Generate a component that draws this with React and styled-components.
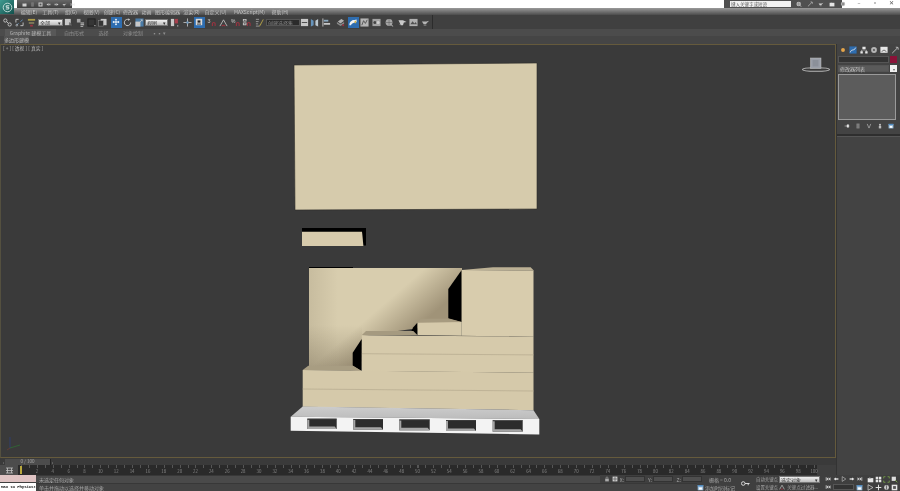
import React from "react";
import styled, { createGlobalStyle } from "styled-components";

const Global = createGlobalStyle`
  html, body { margin: 0; padding: 0; background: #3a3a3a; overflow: hidden; }
  #root { width: 900px; height: 491px; }
`;

const Page = styled.div`
  width: 900px; height: 491px; display: flex; flex-direction: column; position: relative; overflow: hidden;
  background: #3f3f3f; color: #a8a8a8;
  font-family: "Noto Sans CJK SC", "Noto Sans", sans-serif; font-size: 5.5px; line-height: 1;
  filter: blur(0.4px);
`;
const Logo = styled.div`
  position: absolute; left: 0; top: 0; width: 14px; height: 14px; z-index: 2;
  background: linear-gradient(135deg, #3f9a90, #12504c); display: flex; align-items: center; justify-content: center;
`;
const TitleBar = styled.div`height: 8px; background: #fff; display: flex; flex: none;`;
const Qat = styled.div`
  margin-left: 17px; width: 55px; background: linear-gradient(#666, #3f3f3f); display: flex; align-items: center; gap: 1px; padding-left: 1px; box-sizing: border-box;
`;
const QatSlot = styled.span`
  width: ${p => p.$w}px; height: 8px; display: flex; align-items: center; justify-content: center; flex: none; opacity: .85;
`;
const InfoCenter = styled.div`
  margin-left: 652px; width: 118px; height: 8px; background: #505050; display: flex; align-items: center; box-sizing: border-box; padding-left: 6px; gap: 5px; flex: none;
`;
const Search = styled.div`
  width: 61px; height: 6px; background: #f2f2f2; color: #555; font-size: 4.5px; display: flex; align-items: center; padding-left: 1px; box-sizing: border-box; flex: none; white-space: nowrap; overflow: hidden;
`;
const WinButtons = styled.div`display: flex; margin-left: 9px; align-items: center; color: #555;`;
const WinBtn = styled.span`width: 16px; display: flex; justify-content: center;`;

const MenuBar = styled.div`
  height: 7px; flex: none; background: linear-gradient(#9a9a9a, #4c4c4c); display: flex; align-items: center; padding-left: 18px; color: #c4c4c4; font-size: 5px;
`;
const MenuItem = styled.span`
  width: ${p => p.$w}px; flex: none; white-space: nowrap; text-align: center;
`;

const Toolbar = styled.div`
  height: 14px; flex: none; display: flex; background: #404040;
`;
const ToolGroup = styled.div`
  width: 433px; box-sizing: border-box; padding-left: 2px; display: flex; align-items: center; border-right: 1px solid #2c2c2c;
`;
const Slot = styled.div`
  width: ${p => p.$w}px; height: 12px; flex: none; display: flex; align-items: center; justify-content: center;
`;
const ToolBtn = styled.div`
  width: 11px; height: 11px; display: flex; align-items: center; justify-content: center;
  background: ${p => (p.$on ? "#2e6db0" : "transparent")};
  opacity: ${p => (p.$on ? 1 : 0.82)};
`;
const Combo = styled.div`
  width: ${p => p.$w}px; height: 7px; flex: none; box-sizing: border-box; margin-left: ${p => p.$ml || 0}px;
  background: ${p => (p.$dark ? "#2b2b2b" : "linear-gradient(#f0f0f0,#bdbdbd)")}; color: ${p => (p.$dark ? "#8d8d8d" : "#333")};
  border: 1px solid ${p => (p.$dark ? "#555" : "#777")}; font-size: 5px; display: flex; align-items: center; justify-content: space-between; padding: 0 1px; white-space: nowrap; overflow: hidden;
`;

const RibbonTabs = styled.div`
  height: 7px; flex: none; background: #4c4c4c; display: flex; align-items: center; font-size: 5px; color: #8f8f8f;
`;
const RibbonTab = styled.span`
  width: ${p => p.$w}px; height: 7px; flex: none; display: flex; align-items: center; justify-content: center; white-space: nowrap;
  background: ${p => (p.$on ? "#585858" : "transparent")}; color: ${p => (p.$on ? "#b5b5b5" : "#8f8f8f")};
  margin-left: ${p => p.$ml || 0}px;
`;
const RibbonBody = styled.div`
  height: 8px; flex: none; background: #454545; display: flex; align-items: flex-start; padding-left: 4px;
`;
const SubTab = styled.span`
  width: 25px; height: 7px; display: flex; align-items: center; justify-content: center; background: #525252; color: #bcbcbc; font-size: 5px; white-space: nowrap;
`;

const Workspace = styled.div`
  flex: 1; min-height: 0; display: grid; grid-template-columns: 836px 64px;
`;
const LeftCol = styled.div`display: flex; flex-direction: column; min-height: 0;`;
const Viewport = styled.div`
  height: 414px; flex: none; position: relative; box-sizing: border-box; background: #3a3a3a; border: 1px solid #655a3c; border-left-color: #54503f;
`;
const ViewLabel = styled.div`
  position: absolute; left: 2px; top: 1px; font-size: 4.8px; color: #b5b5b5; white-space: pre; z-index: 1;
`;
const Scene = styled.svg`position: absolute; left: -1px; top: -1px; display: block;`;

const SliderRow = styled.div`
  height: 7px; flex: none; background: #3a3a3a; display: flex; align-items: center; padding-left: 2px;
`;
const SliderEnd = styled.span`
  width: 3px; color: #999; font-size: 5px; flex: none; text-align: center;
`;
const SliderThumb = styled.div`
  width: 45px; height: 6px; background: #4c4c4c; border-right: 1px solid #222; color: #a8a8a8; font-size: 4.6px; display: flex; align-items: center; justify-content: center; flex: none;
`;
const RulerRow = styled.div`
  height: 10px; flex: none; display: flex; background: #3f3f3f;
`;
const RulerKey = styled.div`
  width: 18px; flex: none; background: #4c4c4c; display: flex; align-items: center; justify-content: center;
`;
const Ruler = styled.div`
  width: 799px; flex: none; position: relative; background: #2a2a2a;
  background-image: repeating-linear-gradient(90deg, #565656 0 1px, transparent 1px 7.93px);
  background-size: 100% 3px; background-repeat: no-repeat; background-position: 3px 0;
`;
const Mark = styled.div`
  position: absolute; left: 2px; top: 1px; width: 2px; height: 8px; background: #b9a93e;
`;
const RulerNums = styled.div`
  display: flex; padding-left: 11px; padding-top: 4px; color: #858585; font-size: 4.4px;
`;
const RulerNum = styled.span`width: 15.86px; flex: none; text-align: center;`;

const Panel = styled.div`
  background: #434343; border-left: 1px solid #333; display: flex; flex-direction: column; align-items: center; min-height: 0;
`;
const PanelTabs = styled.div`
  height: 12px; width: 100%; flex: none; box-sizing: border-box; padding-left: 1px; display: flex; align-items: center;
`;
const PanelTab = styled.span`width: 10.4px; display: flex; justify-content: center;`;
const FieldRow = styled.div`
  width: 59px; flex: none; display: flex; justify-content: space-between; margin-bottom: 2px; align-self: flex-start; margin-left: 1px;
`;
const NameField = styled.div`
  width: 51px; height: 7px; box-sizing: border-box; background: ${p => (p.$list ? "#5a5a5a" : "#333")}; border: 1px solid #555; color: #c0c0c0; font-size: 5px; display: flex; align-items: center; padding-left: 1px; white-space: nowrap;
`;
const Swatch = styled.div`
  width: 7px; height: 7px; background: ${p => p.$c}; color: #666; font-size: 4px; display: flex; align-items: center; justify-content: center;
`;
const StackList = styled.div`
  width: 58px; height: 46px; flex: none; box-sizing: border-box; background: #5c5c5c; border: 1px solid #9a9a9a; align-self: flex-start; margin-left: 1px;
`;
const StackTools = styled.div`
  width: 100%; height: 10px; flex: none; display: flex; align-items: center; justify-content: space-around; padding: 0 4px; box-sizing: border-box; margin-top: 1px;
`;
const PanelRule = styled.div`
  width: 100%; height: 2px; flex: none; margin-top: 3px; background: #2e2e2e; border-bottom: 1px solid #555;
`;

const StatusBar = styled.div`
  height: 16px; flex: none; display: flex; background: #3f3f3f;
`;
const MaxBox = styled.div`width: 36px; flex: none; display: flex; flex-direction: column; gap: 1px;`;
const MaxPink = styled.div`height: 7px; background: #dfc3c3;`;
const MaxWhite = styled.div`
  height: 8px; background: #fff; color: #111; font-family: "Liberation Mono", monospace; font-size: 4.2px; letter-spacing: -.2px; font-weight: 700; display: flex; align-items: center; justify-content: space-between; padding: 0 1px; box-sizing: border-box; white-space: nowrap;
`;
const Prompts = styled.div`width: 699px; flex: none; display: flex; flex-direction: column;`;
const PromptRow = styled.div`display: flex; height: 8px; align-items: center;`;
const Message = styled.div`
  flex: 1; height: 7px; background: ${p => (p.$top ? "#4a4a4a" : "#434343")}; border-top: 1px solid #383838; display: flex; align-items: center; padding-left: 3px; color: #a5a5a5; font-size: 5px; white-space: nowrap;
`;
const CoordArea = styled.div`
  width: 135px; flex: none; display: flex; align-items: center; padding-left: 3px; box-sizing: border-box; font-size: 5px; color: #a5a5a5;
`;
const CoordIcon = styled.span`width: 8px; flex: none; display: flex; justify-content: center;`;
const CoordLabel = styled.span`width: ${p => p.$w || 6}px; flex: none; text-align: right; padding-right: 1px; box-sizing: border-box;`;
const CoordField = styled.div`width: 20px; height: 6px; flex: none; background: #4f4f4f; border: 1px solid #333; box-sizing: border-box;`;
const GridText = styled.span`margin-left: 7px; white-space: nowrap;`;
const TagArea = styled.div`
  width: 38px; flex: none; display: flex; align-items: center; gap: 1px; font-size: 5px; color: #a5a5a5; white-space: nowrap;
`;
const KeyCol = styled.div`width: 20px; flex: none; display: flex; align-items: center; justify-content: center;`;
const KeyLabels = styled.div`width: 24px; flex: none; display: flex; flex-direction: column; justify-content: space-around; align-items: center; font-size: 4.4px; color: #a8a8a8; white-space: nowrap;`;
const KeyControls = styled.div`width: 42px; flex: none; display: flex; flex-direction: column; justify-content: space-around;`;
const FilterRow = styled.div`display: flex; align-items: center; gap: 2px; height: 7px; font-size: 4.6px; color: #a0a0a0; white-space: nowrap;`;
const Play = styled.div`width: 38px; margin-left: 4px; flex: none; display: flex; flex-direction: column; justify-content: space-around;`;
const Nav = styled.div`width: 34px; flex: none; display: grid; grid-template-columns: repeat(4, 8px); grid-template-rows: 8px 8px; align-items: center; justify-items: center; margin-left: 3px;`;
const IconRow = styled.div`display: flex; align-items: center; justify-content: space-between; height: 8px;`;
const FrameField = styled.div`width: 21px; height: 6px; background: #333; border: 1px solid #555; box-sizing: border-box;`;

const Ico = styled.svg`display: block; flex: none;`;
const I = ({ s = 10, children }) => <Ico width={s} height={s} viewBox="0 0 10 10" fill="none">{children}</Ico>;

const W = "#e6e6e6", G = "#9d9d9d", R = "#b03040", B = "#6fa7d8", Y = "#c5b04a", D = "#222";
const mag = <path d="M6 9V6.5a1.4 1.4 0 0 1 3 0V9" stroke={R} strokeWidth="1.2" />;

const icons = {
  link: <><circle cx="2.6" cy="2.8" r="1.8" stroke={W} /><circle cx="7.4" cy="7.2" r="1.8" stroke={W} /><path d="M4 4l2 2" stroke={W} /></>,
  unlink: <><path d="M1 5V1.5h3M9 5v3.5H6" stroke={W} /><path d="M1.5 8L4 6M8.5 2L6 4" stroke={B} /><circle cx="2" cy="8" r="1" stroke={W} strokeWidth=".7" /></>,
  bind: <><path d="M1 1h8v2H1z" fill={Y} /><path d="M2 4.5h6v2H2z" fill="#8f8a60" /><path d="M3.5 7.5h3v2h-3z" fill={R} /></>,
  selobj: <><rect x="1" y="1" width="6.5" height="7" fill={W} /><path d="M6 5l3.5 2-1.5.5 1 1.5-1 .5-1-1.5L6 9z" fill="#777" stroke={D} strokeWidth=".3" /></>,
  selname: <><path d="M1 1h4v4H1z" fill="#bbb" /><path d="M5 5h4v1H5zM5 7h4v1H5zM5 9h3v.8H5z" fill={W} /></>,
  rect: <><rect x="1" y="1" width="8" height="8" fill="#353535" stroke="#161616" /><path d="M8 8.5h1.5" stroke={W} /></>,
  win: <><rect x="3" y="1" width="6.5" height="7" fill={W} /><rect x=".8" y="3" width="5" height="6" fill="#333" stroke="#aaa" strokeWidth=".5" /></>,
  move: <><path d="M5 .5L6.5 2.5h-1V4.5h2v-1L9.5 5 7.5 6.5v-1h-2v2h1L5 9.5 3.5 7.5h1v-2h-2v1L.5 5l2-1.5v1h2v-2h-1z" fill="#fff" /></>,
  rot: <><path d="M8.5 5A3.5 3.5 0 1 1 6.6 1.9" stroke={W} strokeWidth="1.1" /><path d="M6 .2l2 1.8-2.4 1z" fill={W} /></>,
  scale: <><rect x=".5" y=".5" width="9" height="9" fill="#4d88bd" /><path d="M.5 9.5V4h5.5v5.5z" fill={W} /><path d="M5 5l3-3M6.3 2H8v1.7" stroke={W} strokeWidth=".8" /></>,
  ref: <><rect x="1" y="1" width="3.6" height="8" fill={W} /><rect x="5.2" y="1" width="3.6" height="5" fill="#c04050" /><path d="M8.6 8v1.5" stroke={W} /></>,
  pivot: <><path d="M5 .5v9M.5 5h9" stroke={W} strokeWidth=".9" /><rect x="3.8" y="3.8" width="2.4" height="2.4" fill={B} /></>,
  key: <><rect x="1" y="1" width="8" height="8" fill="#d9d9d9" /><rect x="3.2" y="3" width="3.6" height="2.8" fill="#222" /><path d="M2.5 7.6h5" stroke="#222" /></>,
  snap: <><text x=".5" y="5.5" fontSize="6" fill={W} fontFamily="Liberation Sans">3</text>{mag}</>,
  angle: <><path d="M1 9L5 2l4 7" stroke={W} strokeWidth=".9" /><path d="M3 9a3 3 0 0 1 4 0" stroke={R} strokeWidth="1.2" /></>,
  pct: <><text x="0" y="5.5" fontSize="5.5" fill={W} fontFamily="Liberation Sans">%</text>{mag}</>,
  spin: <><path d="M1 1h4v3H1zM1 5h4v3H1z" fill={W} /><path d="M2 2.5h2M2 6.5h2" stroke="#333" />{mag}</>,
  edit: <><path d="M1 1.5h3.5M1 4h3M1 6.5h2.5M1 9h4" stroke={W} strokeWidth=".7" /><path d="M9 1L5 8l-.5 1.5L6 8.5 9.5 2z" fill={Y} /></>,
  named: <><rect x="1" y="1" width="8" height="8" fill={W} /><path d="M2 5h6" stroke="#444" /></>,
  mirror: <><path d="M1 1l3 2v5L1 9.5z" fill={B} /><path d="M9 1L6 3v5l3 1.5z" fill="#d7e5ef" /><path d="M5 .5v9" stroke="#444" /></>,
  align: <><path d="M1 .5v9" stroke={W} /><path d="M2 2h5v2H2z" fill="#9cc0dd" /><path d="M2 5.5h7v2H2z" fill={W} /></>,
  layer: <><path d="M2 4l4-3 3 2-4 3z" fill="#ccc" /><path d="M1 6.5l4 2.5 4-2.5v-2L5 7 1 4.5z" fill="#999" /><path d="M7 7h2v2H7z" fill={R} /></>,
  curve: <><path d="M.5 7.5C2 3 4.5 2.5 7 2.5L9.5 2v3L7 5.5C5 6 3 7 2.5 9H.5z" fill="#f3f3f3" /><path d="M7 3.5h2v3H7z" fill="#d7b84d" /></>,
  graph: <><rect x=".5" y=".5" width="9" height="9" fill="#cfcfcf" /><path d="M2 8l2-5 2 3 2-4" stroke="#555" /></>,
  mat: <><rect x=".5" y="1" width="9" height="8" fill="#b8b8b8" /><circle cx="3.2" cy="5" r="1.7" fill="#444" /><circle cx="6.8" cy="5" r="1.7" fill="#eee" /></>,
  sphere: <><circle cx="4.5" cy="5" r="3.8" fill="#bdbdbd" /><path d="M1 5h7M4.5 1v8" stroke="#555" strokeWidth=".5" /><path d="M7 8l2 1.2" stroke={W} /></>,
  teapot: <><path d="M.5 2.5h5l4 2-3 .5-1 3H3L1.5 4.5z" fill={W} /><path d="M1 6.5l1 1" stroke="#777" /></>,
  rend2: <><rect x=".5" y="1" width="9" height="8" fill="#c9c9c9" /><path d="M1.5 7L4 3.5 6 6l1.5-1.5L8.8 7z" fill="#555" /></>,
  kettle: <><path d="M1 4h5l3-1-2.5 2.5-1 1.5H3z" fill="#cfcfcf" /><path d="M3 8h3" stroke={G} /></>,
  dot: <><circle cx="5" cy="5" r="2.4" fill="#e5a54a" /></>,
  panelMod: <><rect x=".5" y=".5" width="9" height="9" fill="#2e6db0" /><path d="M1.5 8C3 3 6 7 8.5 2" stroke={W} strokeWidth="1.1" /></>,
  hier: <><path d="M3 .8h4v3H3zM.5 6.5h3v3h-3zM6.5 6.5h3v3h-3z" fill={W} /><path d="M5 3.5V5H2v2M5 5h3v2" stroke={W} strokeWidth=".6" /></>,
  motion: <><circle cx="5" cy="5" r="3.6" fill="#b5b5b5" /><circle cx="5" cy="5" r="1.3" fill="#555" /></>,
  display: <><rect x=".5" y="1" width="9" height="7.5" fill={W} /><path d="M2 7l3-2 3 2" stroke="#555" /></>,
  util: <><path d="M1.5 9L8 2.5M6 1.5l2.8.3.2 2.8" stroke="#c9c9c9" strokeWidth="1.1" /></>,
  pin: <><path d="M1 5h4M5 3h3v4H5z" stroke={W} fill={W} strokeWidth=".8" /></>,
  bars: <><rect x="2.5" y="1" width="5" height="8" fill="#8a8a8a" /><path d="M3 3h4M3 5h4M3 7h4" stroke="#555" strokeWidth=".6" /></>,
  vee: <><path d="M2 1.5l3 7 3-7" stroke="#c9c9c9" strokeWidth="1" /></>,
  drum: <><circle cx="5" cy="3" r="1.8" fill="#bbb" /><rect x="3" y="5" width="4" height="4" fill="#bbb" /></>,
  cfg: <><rect x="1" y="1.5" width="8" height="7.5" fill="#9fc0dd" /><rect x="1" y="1.5" width="8" height="2" fill="#4d88bd" /><path d="M3 5h4v3H3z" fill="#fff" /></>,
  keyS: <><circle cx="2.5" cy="5" r="2" stroke={W} strokeWidth="1" /><path d="M4.5 5h5M8 5v2" stroke={W} strokeWidth="1" /></>,
  lock: <><rect x="2" y="4.5" width="6" height="4.5" fill="#aaa" /><path d="M3.5 4.5V3a1.5 1.5 0 0 1 3 0v1.5" stroke="#aaa" /></>,
  abs: <><rect x="1" y="1" width="8" height="8" fill="#cfcfcf" /><path d="M5 1.5v7M1.5 5h7" stroke="#444" /></>,
  first: <><path d="M2 2v6" stroke={W} strokeWidth="1.2" /><path d="M5.5 2v6L2.8 5zM9 2v6L6.2 5z" fill={W} /></>,
  prev: <><path d="M5 2.5v5L1 5z" fill={W} /><rect x="5" y="3.5" width="4" height="3" fill="#bbb" /></>,
  play: <><path d="M2 1v8l6-4z" stroke={W} strokeWidth=".8" /></>,
  next: <><path d="M5 2.5v5L9 5z" fill={W} /><rect x="1" y="3.5" width="4" height="3" fill="#bbb" /></>,
  last: <><path d="M8 2v6" stroke={W} strokeWidth="1.2" /><path d="M1 2v6l2.7-3zM4.5 2v6L7.2 5z" fill={W} /></>,
  navA: <><path d="M1 3h8v6H1z" fill={W} /><path d="M4 1.5l2 2H2z" fill="#888" /></>,
  navB: <><path d="M1 1h3.5v3.5H1zM5.5 1H9v3.5H5.5zM1 5.5h3.5V9H1zM5.5 5.5H9V9H5.5z" fill={W} /></>,
  navC: <><path d="M1 3.5V1h2.5M9 3.5V1H6.5M1 6.5V9h2.5M9 6.5V9H6.5" stroke="#7fb24a" strokeWidth="1" /></>,
  navD: <><path d="M1 1h6v6H1z" fill="#ddd" /><path d="M6 6l3 3" stroke="#7fb24a" strokeWidth="1.2" /></>,
  navE: <><path d="M1.5 1v8l7-4z" stroke={W} strokeWidth=".9" /></>,
  navF: <><path d="M1 5h8M5 1v8" stroke={W} strokeWidth="1.4" /></>,
  navG: <><circle cx="5" cy="5" r="3.5" fill="#c8c8c8" /><path d="M5 2v6" stroke="#444" /></>,
  navH: <><rect x="1" y="1" width="8" height="8" fill={W} /><rect x="3" y="3" width="4" height="4" fill="#555" /></>,
};

const toolbar = [
  ["link", 11], ["unlink", 12], ["bind", 12], ["combo1"], ["selobj", 11], ["selname", 12], ["rect", 11], ["win", 11],
  ["gap", 2], ["move", 12, true], ["rot", 11], ["scale", 12], ["combo2"], ["ref", 13], ["pivot", 12], ["key", 12, true],
  ["snap", 12], ["angle", 12], ["pct", 12], ["spin", 11], ["edit", 14], ["combo3"], ["named", 8], ["mirror", 12],
  ["align", 13], ["layer", 14], ["curve", 12, true], ["graph", 11], ["mat", 12], ["sphere", 14], ["teapot", 12], ["rend2", 11], ["kettle", 12],
];

const menus = [["编辑(E)", 22], ["工具(T)", 21], ["组(G)", 20], ["视图(V)", 21], ["创建(C)", 20], ["修改器", 17], ["动画", 15], ["图形编辑器", 27], ["渲染(R)", 21], ["自定义(U)", 27], ["MAXScript(M)", 41], ["帮助(H)", 20]];

const holes = [[307.3, 336.7, 418.7, 429], [353.3, 383, 419, 429.7], [399.3, 429.7, 419.5, 430.3], [446, 476, 420, 431], [492.7, 522.7, 420.3, 431.7]];

const SceneArt = () => (
  <Scene width="836" height="414" viewBox="0 44 836 414">
    <defs>
      <linearGradient id="wall" x1="386" y1="302" x2="412" y2="332" gradientUnits="userSpaceOnUse">
        <stop offset="0" stopColor="#d8cdae" />
        <stop offset="1" stopColor="#a09378" />
      </linearGradient>
      <linearGradient id="wallEdge" x1="309" y1="0" x2="338" y2="0" gradientUnits="userSpaceOnUse">
        <stop offset="0" stopColor="#5f5440" stopOpacity=".14" />
        <stop offset="1" stopColor="#5f5440" stopOpacity="0" />
      </linearGradient>
      <linearGradient id="wallFloor" x1="0" y1="325" x2="0" y2="366" gradientUnits="userSpaceOnUse">
        <stop offset="0" stopColor="#5f5440" stopOpacity="0" />
        <stop offset="1" stopColor="#5f5440" stopOpacity=".3" />
      </linearGradient>
      <linearGradient id="palletTop" x1="0" y1="406" x2="0" y2="418" gradientUnits="userSpaceOnUse">
        <stop offset="0" stopColor="#cdcdcd" />
        <stop offset="1" stopColor="#bdbdbd" />
      </linearGradient>
    </defs>

    <polygon points="294,65 537,63 537,209 295,210" fill="#d6cbac" stroke="#2d2c28" strokeWidth=".6" />

    <polygon points="302,228 366,228 366,245.5 363,245.5 362,232 302,232" fill="#000" />
    <polygon points="302,231.7 362,231.7 363.4,246 302,246" fill="#d7cbac" />

    <polygon points="309,267 353,267 353,268.5 309,268.5" fill="#000" />
    <polygon points="309,268 462,268 462,322 362,336 361,371 309,366" fill="url(#wall)" />
    <polygon points="309,268 338,268 338,366 309,366" fill="url(#wallEdge)" />
    <polygon points="309,325 362,325 362,366 309,366" fill="url(#wallFloor)" />

    <polygon points="461.7,270 448.3,289 448.3,318.3 461.7,322" fill="#000" />
    <polygon points="461.7,270 493,267.3 530.7,267.3 534,270.7" fill="#bcb195" />
    <polygon points="461.7,270 533.5,270.7 533.5,336.7 461.7,335.7" fill="#d8ccad" />

    <polygon points="420,318.7 448.3,318.7 461.7,322 417.3,322.7" fill="#a79b80" />
    <polygon points="417.3,322.7 461.7,322 461.7,335.7 417.3,335" fill="#d6caab" />
    <polygon points="417.3,322.7 413.3,327.3 411,331.7 417.3,335" fill="#000" />

    <polygon points="366,331 413.3,331 417.3,335 361.7,335.3" fill="#a59a80" />
    <polygon points="361.7,335.3 533.5,336.7 533.5,372.7 361.7,371" fill="#d6caab" />
    <path d="M361.7 353.7L533.5 354.9" stroke="#b4a98e" strokeWidth=".7" />
    <polygon points="361.7,339 352.7,352.7 352.7,365.5 361.2,370.8" fill="#000" />

    <polygon points="308.3,365.7 352.7,365.7 361.2,370.8 302.7,370" fill="#a89d82" />
    <polygon points="302.7,370 533.5,372.7 533.5,410.2 302.7,406.7" fill="#d5c9aa" />
    <path d="M302.7 389L533.5 391" stroke="#b4a98e" strokeWidth=".7" />

    <polygon points="302.7,406.5 533.5,410.2 539.3,419 290.7,416.7" fill="url(#palletTop)" />
    <polygon points="290.7,416.7 539.3,419 539.3,434.5 290.7,430.7" fill="#f3f3f3" />
    {holes.map(([x1, x2, y1, y2]) => (
      <g key={x1}>
        <rect x={x1} y={y1} width={x2 - x1} height={y2 - y1} fill="#2c2c2c" />
        <polygon points={`${x1},${y1 + 1} ${x1 + 2},${y1 + 1} ${x1 + 2},${y2 - 2.5} ${x2 - 2},${y2 - 2.5} ${x2},${y2} ${x1},${y2}`} fill="#a5a5a5" />
        <rect x={x1} y={y1} width={x2 - x1} height=".7" fill="#444" />
      </g>
    ))}

    <ellipse cx="816" cy="69.5" rx="13.5" ry="1.8" fill="none" stroke="#b8b8b8" strokeWidth="1.1" />
    <rect x="810.5" y="58" width="10.5" height="10.5" fill="#9a9fa8" stroke="#c4c4c4" strokeWidth=".5" />
    <rect x="812.5" y="60" width="6" height="6.5" fill="#8b9099" />

    <path d="M10 437V448" stroke="#2d3f7a" strokeWidth=".8" />
    <path d="M10 448L20 445" stroke="#2f6b34" strokeWidth=".8" />
    <path d="M10 448L7 450" stroke="#7a3a30" strokeWidth=".6" />
  </Scene>
);

const ticks = Array.from({ length: 50 }, (_, i) => (i + 1) * 2);

export default function App() {
  let combo = 0;
  return (
    <>
      <Global />
      <Page>
        <Logo>
          <svg width="11" height="11" viewBox="0 0 11 11" fill="none">
            <circle cx="5.5" cy="5.5" r="4.3" stroke="#cfe5e2" strokeWidth=".9" />
            <path d="M7.3 3.8H4.2v1.5h2.6v1.7H3.8" stroke="#e8f2f1" strokeWidth=".9" />
          </svg>
        </Logo>
        <TitleBar>
          <Qat>
            <QatSlot $w={2} />
            {["navA", "bars", "navH", "prev", "next", "kettle", "first"].map((n, i) => (
              <QatSlot key={i} $w={7}><I s={5}>{icons[n]}</I></QatSlot>
            ))}
          </Qat>
          <InfoCenter>
            <Search>键入关键字或短语</Search>
            {["sphere", "util", "kettle", "navA", "motion"].map((n, i) => (
              <I key={i} s={6}>{icons[n]}</I>
            ))}
          </InfoCenter>
          <WinButtons>
            <WinBtn>–</WinBtn>
            <WinBtn>▫</WinBtn>
            <WinBtn>✕</WinBtn>
          </WinButtons>
        </TitleBar>
        <MenuBar>
          {menus.map(([t, w]) => <MenuItem key={t} $w={w}>{t}</MenuItem>)}
        </MenuBar>
        <Toolbar>
          <ToolGroup>
            {toolbar.map(([n, w, on], i) => {
              if (n === "gap") return <Slot key={i} $w={w} />;
              if (n.startsWith("combo")) {
                combo += 1;
                if (combo === 1) return <Combo key={i} $w={25} $ml={1}>全部<span>▾</span></Combo>;
                if (combo === 2) return <Combo key={i} $w={23}>视图<span>▾</span></Combo>;
                return <Combo key={i} $w={34} $dark>创建选择集</Combo>;
              }
              return <Slot key={i} $w={w}><ToolBtn $on={on}><I s={on ? 8 : 9}>{icons[n]}</I></ToolBtn></Slot>;
            })}
          </ToolGroup>
        </Toolbar>
        <RibbonTabs>
          <RibbonTab $w={51} $ml={5} $on>Graphite 建模工具</RibbonTab>
          <RibbonTab $w={36}>自由形式</RibbonTab>
          <RibbonTab $w={23}>选择</RibbonTab>
          <RibbonTab $w={36}>对象绘制</RibbonTab>
          <RibbonTab $w={16}>▪▪ ▾</RibbonTab>
        </RibbonTabs>
        <RibbonBody><SubTab>多边形建模</SubTab></RibbonBody>
        <Workspace>
          <LeftCol>
            <Viewport>
              <ViewLabel>[ + ] [ 透视 ] [ 真实 ]</ViewLabel>
              <SceneArt />
            </Viewport>
            <SliderRow>
              <SliderEnd>‹</SliderEnd>
              <SliderThumb>0 / 100</SliderThumb>
              <SliderEnd>›</SliderEnd>
            </SliderRow>
            <RulerRow>
              <RulerKey>
                <svg width="9" height="7" viewBox="0 0 9 7" fill="none"><path d="M1 1h7M1 3.5h7M1 6h7M2.5 1v5M6.5 1v5" stroke="#c0c0c0" strokeWidth=".8" /></svg>
              </RulerKey>
              <Ruler>
                <Mark />
                <RulerNums>
                  {ticks.map(n => <RulerNum key={n}>{n}</RulerNum>)}
                </RulerNums>
              </Ruler>
            </RulerRow>
          </LeftCol>
          <Panel>
            <PanelTabs>
              {["dot", "panelMod", "hier", "motion", "display", "util"].map(n => (
                <PanelTab key={n}><I s={8}>{icons[n]}</I></PanelTab>
              ))}
            </PanelTabs>
            <FieldRow><NameField /><Swatch $c="#8a1238" /></FieldRow>
            <FieldRow><NameField $list>修改器列表</NameField><Swatch $c="#f2f2f2">▾</Swatch></FieldRow>
            <StackList />
            <StackTools>
              {["pin", "bars", "vee", "drum", "cfg"].map(n => <I key={n} s={6}>{icons[n]}</I>)}
            </StackTools>
            <PanelRule />
          </Panel>
        </Workspace>
        <StatusBar>
          <MaxBox>
            <MaxPink />
            <MaxWhite><span>Max to Physics</span><span>▸</span></MaxWhite>
          </MaxBox>
          <Prompts>
            <PromptRow>
              <Message $top>未选定任何对象</Message>
              <CoordArea>
                <CoordIcon><I s={6}>{icons.lock}</I></CoordIcon>
                <CoordIcon><I s={6}>{icons.abs}</I></CoordIcon>
                <CoordLabel>X:</CoordLabel><CoordField />
                <CoordLabel $w={8}>Y:</CoordLabel><CoordField />
                <CoordLabel $w={9}>Z:</CoordLabel><CoordField />
                <GridText>栅格 = 0.0</GridText>
              </CoordArea>
            </PromptRow>
            <PromptRow>
              <Message>单击并拖动以选择并移动对象</Message>
              <TagArea><I s={7}>{icons.cfg}</I>添加时间标记</TagArea>
            </PromptRow>
          </Prompts>
          <KeyCol><I s={9}>{icons.keyS}</I></KeyCol>
          <KeyLabels><span>自动关键点</span><span>设置关键点</span></KeyLabels>
          <KeyControls>
            <Combo $w={41}>选定对象<span>▾</span></Combo>
            <FilterRow><I s={6}>{icons.angle}</I>关键点过滤器...</FilterRow>
          </KeyControls>
          <Play>
            <IconRow>
              {["first", "prev", "play", "next", "last"].map(n => <I key={n} s={6}>{icons[n]}</I>)}
            </IconRow>
            <IconRow>
              <I s={6}>{icons.first}</I>
              <FrameField />
              <I s={7}>{icons.cfg}</I>
            </IconRow>
          </Play>
          <Nav>
            {["navA", "navB", "navC", "navD", "navE", "navF", "navG", "navH"].map(n => <I key={n} s={7}>{icons[n]}</I>)}
          </Nav>
        </StatusBar>
      </Page>
    </>
  );
}
